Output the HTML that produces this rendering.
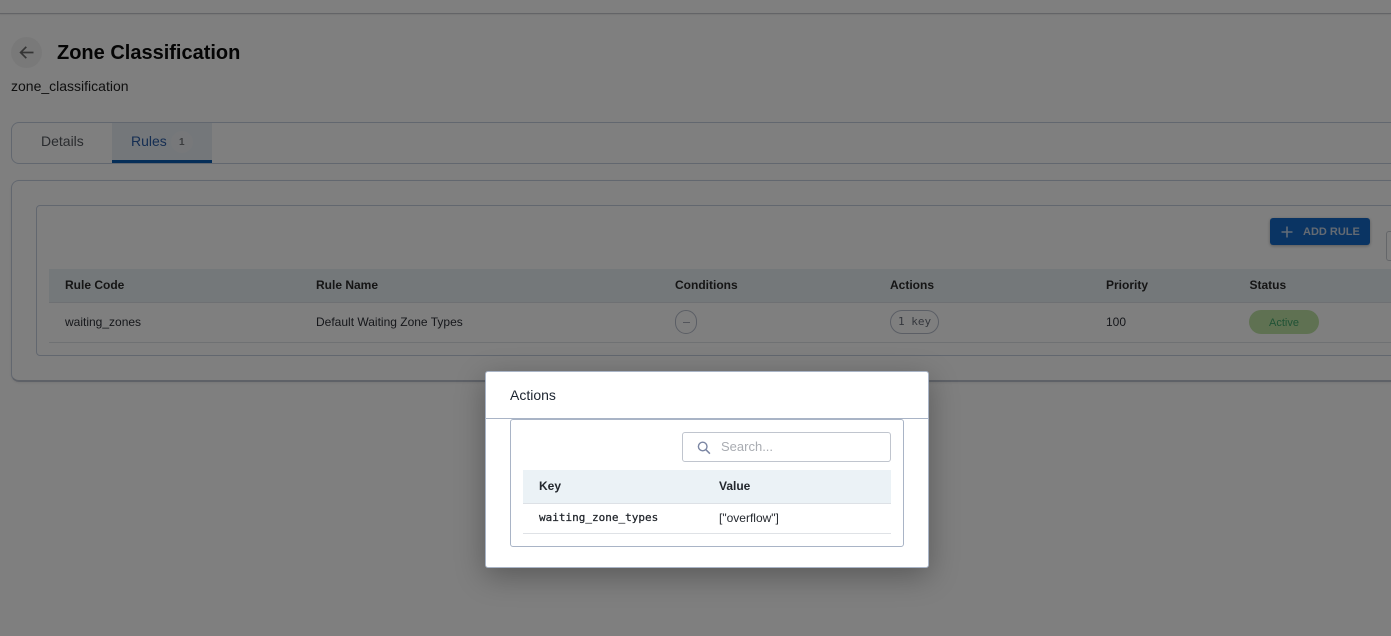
<!DOCTYPE html>
<html>
<head>
<meta charset="utf-8">
<style>
html,body{margin:0;padding:0;width:1391px;height:636px;overflow:hidden;background:#fff;font-family:"Liberation Sans",sans-serif;color:#1a1a1a}
.a{position:absolute;white-space:nowrap}
.box{position:absolute;box-sizing:border-box;background:transparent}
.th{font-size:12px;font-weight:700;line-height:14px;color:#2a2a2a}
.td{font-size:12px;line-height:14px;color:#2c2f36}
.mono{font-family:"DejaVu Sans Mono",monospace}
</style>
</head>
<body>
<div class="box" style="left:0;top:0;width:1391px;height:14px;border-bottom:1px solid #c6c9ce;box-shadow:0 1px 1px rgba(0,0,0,.08)"></div>

<div class="box" style="left:11px;top:37px;width:31px;height:31px;border-radius:50%;background:#f3f3f3"></div>
<svg class="a" style="left:17px;top:43px" width="19" height="19" viewBox="0 0 19 19"><path d="M16.5 9.5H3.8M9.3 3.8L3.6 9.5l5.7 5.7" fill="none" stroke="#6b6b6b" stroke-width="1.7"/></svg>
<div class="a" style="left:57px;top:41px;font-size:20px;line-height:24px;font-weight:700;color:#0a0a0a">Zone Classification</div>
<div class="a" style="left:11px;top:78px;font-size:14px;line-height:16px;color:#1f1f1f">zone_classification</div>

<div class="box" style="left:11px;top:122px;width:1400px;height:42px;border:1px solid #c5cede;border-radius:8px"></div>
<div class="a" style="left:41px;top:133px;font-size:14px;line-height:16px;color:#55585e">Details</div>
<div class="box" style="left:112px;top:123px;width:100px;height:40px;background:#e9eef4;border-bottom:3px solid #0b5cb0"></div>
<div class="a" style="left:131px;top:133px;font-size:14px;line-height:16px;color:#2b5da6">Rules</div>
<div class="box" style="left:171px;top:131px;width:22px;height:22px;border-radius:50%;background:#eef1f5"></div>
<div class="a" style="left:179px;top:137px;font-size:10px;line-height:12px;font-weight:700;color:#77797c">1</div>

<div class="box" style="left:11px;top:180px;width:1400px;height:202px;border:1px solid #c5cede;border-bottom:2px solid #bcc3cf;border-radius:8px;box-shadow:0 1px 2px rgba(0,0,0,.08)"></div>
<div class="box" style="left:36px;top:205px;width:1400px;height:151px;border:1px solid #c5cede;border-radius:4px"></div>

<div class="box" style="left:1270px;top:218px;width:100px;height:27px;background:#1469c7;border-radius:3px;box-shadow:0 1px 3px rgba(0,0,0,.3)"></div>
<svg class="a" style="left:1280px;top:225px" width="14" height="14" viewBox="0 0 14 14"><path d="M7 1.5v11M1.5 7h11" stroke="#c4d8ee" stroke-width="1.6" fill="none"/></svg>
<div class="a" style="left:1303px;top:225px;font-size:11px;line-height:14px;font-weight:700;color:#c8d4e4">ADD RULE</div>
<div class="box" style="left:1386px;top:231px;width:20px;height:30px;border:1px solid #c9ccd2;border-radius:3px"></div>

<div class="box" style="left:49px;top:269px;width:1342px;height:34px;background:#e9f0f5;border-bottom:1px solid #dde1e6"></div>
<div class="a th" style="left:65px;top:278px">Rule Code</div>
<div class="a th" style="left:316px;top:278px">Rule Name</div>
<div class="a th" style="left:675px;top:278px">Conditions</div>
<div class="a th" style="left:890px;top:278px">Actions</div>
<div class="a th" style="left:1106px;top:278px">Priority</div>
<div class="a th" style="left:1249.5px;top:278px">Status</div>

<div class="box" style="left:49px;top:342px;width:1342px;height:1px;background:#dfe2e6"></div>
<div class="a td" style="left:65px;top:315px">waiting_zones</div>
<div class="a td" style="left:316px;top:315px">Default Waiting Zone Types</div>
<div class="box" style="left:675px;top:310px;width:22px;height:24px;border:1px solid #b6bccb;border-radius:12px"></div>
<div class="box" style="left:683px;top:322px;width:7px;height:1px;background:#a6abb6"></div>
<div class="box" style="left:890px;top:310px;width:49px;height:24px;border:1px solid #b6bccb;border-radius:12px"></div>
<div class="a mono" style="left:898px;top:315px;font-size:11px;line-height:14px;color:#6a6f7a">1 key</div>
<div class="a td" style="left:1106px;top:315px">100</div>
<div class="box" style="left:1249px;top:310px;width:70px;height:24px;border-radius:12px;background:#bfe3a5"></div>
<div class="a" style="left:1269px;top:316px;font-size:11px;line-height:14px;color:#40a56a">Active</div>

<div class="box" style="left:0;top:0;width:1391px;height:636px;background:rgba(0,0,0,.5)"></div>

<div class="box" style="left:485px;top:371px;width:444px;height:197px;background:#fff;border:1px solid #a9b4c6;border-radius:3px;box-shadow:0 8px 30px rgba(0,0,0,.3)"></div>
<div class="a" style="left:510px;top:387px;font-size:14px;line-height:16px;color:#1d2530">Actions</div>
<div class="box" style="left:486px;top:418px;width:442px;height:1px;background:#a9b4c6"></div>
<div class="box" style="left:510px;top:419px;width:394px;height:128px;background:#fff;border:1px solid #a9b4c6;border-radius:3px"></div>
<div class="box" style="left:682px;top:432px;width:209px;height:30px;border:1px solid #c0c5ce;border-radius:3px"></div>
<svg class="a" style="left:696px;top:440px" width="16" height="16" viewBox="0 0 16 16"><circle cx="6.7" cy="6.5" r="4.3" fill="none" stroke="#7b86a3" stroke-width="1.4"/><path d="M9.9 9.7l4 4" stroke="#7b86a3" stroke-width="1.5" fill="none"/></svg>
<div class="a" style="left:721px;top:439px;font-size:13px;line-height:15px;color:#a9acb2">Search...</div>

<div class="box" style="left:523px;top:470px;width:368px;height:34px;background:#ebf2f6;border-bottom:1px solid #dde1e6"></div>
<div class="a" style="left:539px;top:479px;font-size:12px;line-height:14px;font-weight:700;color:#24282e">Key</div>
<div class="a" style="left:719px;top:479px;font-size:12px;line-height:14px;font-weight:700;color:#24282e">Value</div>
<div class="box" style="left:523px;top:533px;width:368px;height:1px;background:#dfe2e6"></div>
<div class="a mono" style="left:539px;top:511px;font-size:11px;line-height:14px;color:#1f2329;-webkit-text-stroke:.25px #1f2329">waiting_zone_types</div>
<div class="a" style="left:719px;top:511px;font-size:12px;line-height:14px;color:#24282e">["overflow"]</div>
</body>
</html>
